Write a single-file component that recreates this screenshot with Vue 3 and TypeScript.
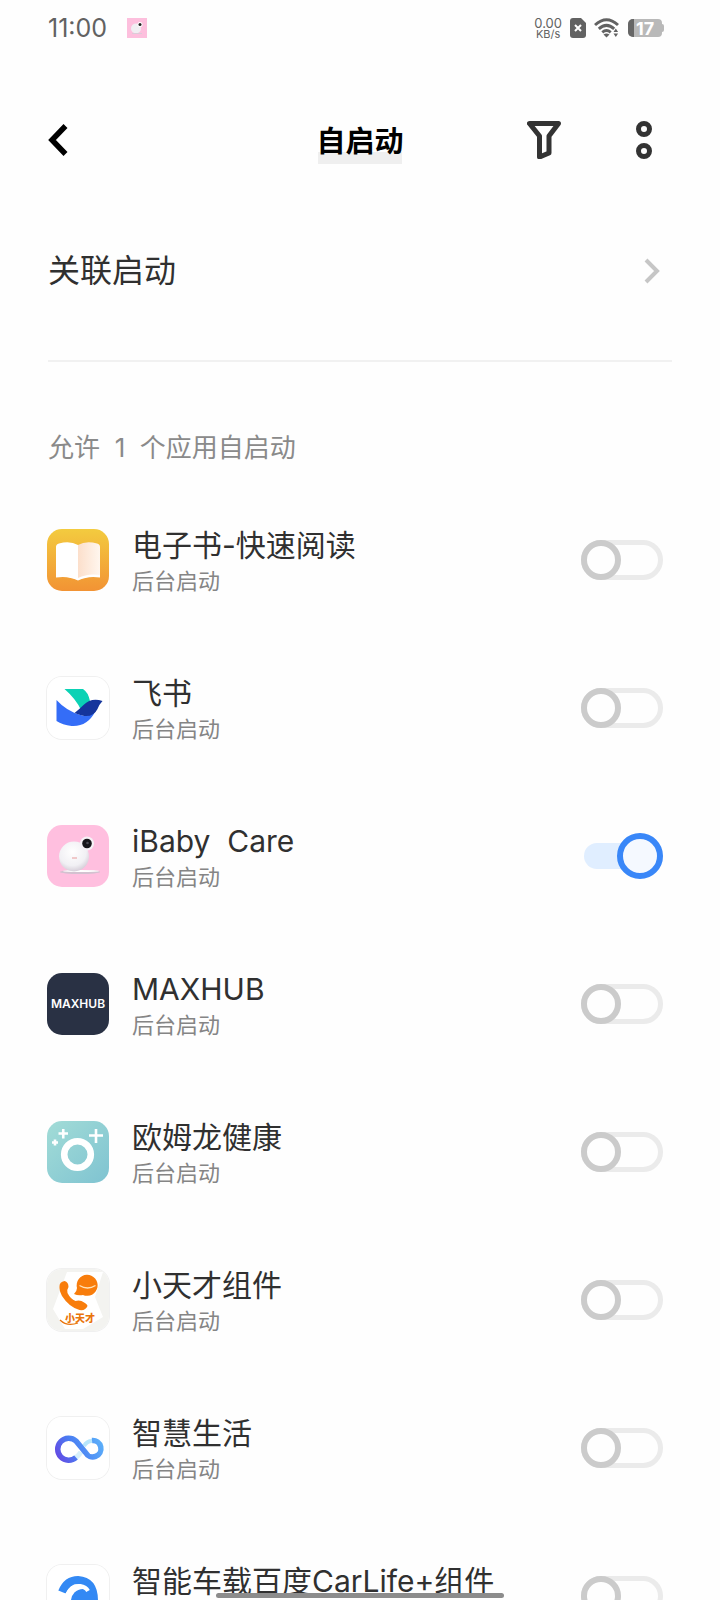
<script setup lang="ts">
import { ref } from 'vue'

interface AppEntry {
  id: string
  name: string
  enabled: boolean
}

const apps = ref<AppEntry[]>([
  { id: 'ebook', name: '电子书-快速阅读', enabled: false },
  { id: 'feishu', name: '飞书', enabled: false },
  { id: 'ibaby', name: 'iBaby  Care', enabled: true },
  { id: 'maxhub', name: 'MAXHUB', enabled: false },
  { id: 'omron', name: '欧姆龙健康', enabled: false },
  { id: 'xtc', name: '小天才组件', enabled: false },
  { id: 'life', name: '智慧生活', enabled: false },
  { id: 'carlife', name: '智能车载百度CarLife+组件', enabled: false },
])
</script>

<template>
  <div class="screen">
    <div class="status">
      <span class="clock">11:00</span>
      <svg class="notice" width="20" height="20" viewBox="0 0 20 20" aria-hidden="true">
        <rect width="20" height="20" fill="#fdbfdd" />
        <circle cx="9" cy="10.500" r="5" fill="#f0eef2" />
        <path d="M5 15.500h10" stroke="#dccbd8" />
        <circle cx="13" cy="6.500" r="2.500" fill="#fff" />
        <circle cx="13" cy="6.500" r="1.500" fill="#222" />
      </svg>
      <div class="speed"><span class="rate">0.00</span><span class="unit">KB/s</span></div>
      <svg class="sim" width="16" height="20" viewBox="0 0 16 20" aria-hidden="true">
        <path d="M3 0h8l5 5v12a3 3 0 0 1-3 3H3a3 3 0 0 1-3-3V3a3 3 0 0 1 3-3z" fill="#626262" />
        <path d="M5 7l6 6M11 7l-6 6" stroke="#fff" stroke-width="2" />
      </svg>
      <svg class="wifi" width="26" height="20" viewBox="0 0 26 20" aria-hidden="true">
        <g fill="none" stroke="#626262" stroke-width="3">
          <path d="M1 7Q12.500-3.500 24 7" />
          <path d="M4.800 10.800Q12.500 4 20.200 10.800" />
          <path d="M8.300 14.300Q12.500 10.800 16.700 14.300" />
        </g>
        <path d="M9.500 16.500q3-2 6 0l-3 3z" fill="#626262" />
        <path d="M19.500 14l2.300-3.500 2.300 3.500zM19.500 15.500l2.300 3.500 2.300-3.500z" fill="#626262" />
      </svg>
      <svg class="battery" width="36" height="18" viewBox="0 0 36 18" aria-hidden="true">
        <path d="M5 0h25a4 4 0 0 1 4 4v1q2 0 2 2v4q0 2-2 2v1a4 4 0 0 1-4 4H5a5 5 0 0 1-5-5V5a5 5 0 0 1 5-5z" fill="#b9b9b9" />
        <path d="M6 0H5a5 5 0 0 0-5 5v8a5 5 0 0 0 5 5h1z" fill="#666" />
        <text x="17" y="16" text-anchor="middle" font-size="18" font-weight="700" fill="#fff">17</text>
      </svg>
    </div>

    <header class="bar">
      <button class="plain back" type="button" aria-label="返回">
        <svg width="20" height="32" viewBox="0 0 20 32"><path d="M17.500 2L4 16l13.500 14" fill="none" stroke="#000" stroke-width="5.500" /></svg>
      </button>
      <h1 class="title">自启动</h1>
      <div class="actions">
        <button class="plain" type="button" aria-label="筛选">
          <svg width="34" height="38" viewBox="0 0 34 38"><path d="M2.500 2.500h29L22 15v17l-9.500 4V15z" fill="none" stroke="#333" stroke-width="5" stroke-linejoin="round" /></svg>
        </button>
        <button class="plain" type="button" aria-label="更多">
          <svg width="16" height="38" viewBox="0 0 16 38"><g fill="none" stroke="#333" stroke-width="5"><circle cx="8" cy="8" r="5.500" /><circle cx="8" cy="30" r="5.500" /></g></svg>
        </button>
      </div>
    </header>

    <nav class="related">
      <a class="related-link" href="#related">
        <span>关联启动</span>
        <svg width="16" height="26" viewBox="0 0 16 26" aria-hidden="true"><path d="M2 2l11 11L2 24" fill="none" stroke="#c6c6c6" stroke-width="4" /></svg>
      </a>
    </nav>

    <h2 class="count">允许&nbsp; 1 &nbsp;个应用自启动</h2>

    <ul class="list">
      <li v-for="app in apps" :key="app.id" class="row">
        <svg class="icon" :class="{ edged: ['feishu', 'xtc', 'life', 'carlife'].includes(app.id) }" width="62" height="62" viewBox="0 0 62 62" aria-hidden="true">
          <defs>
            <linearGradient id="g-book" x1="0" y1="0" x2="0" y2="1"><stop offset="0" stop-color="#f3cb3f" /><stop offset="1" stop-color="#f29334" /></linearGradient>
            <linearGradient id="g-page" x1="0" y1="0" x2="1" y2="0"><stop offset="0" stop-color="#fcdfcb" /><stop offset="1" stop-color="#fff6ee" /></linearGradient>
            <linearGradient id="g-omron" x1="0" y1="0" x2="1" y2="1"><stop offset="0" stop-color="#a2dcd7" /><stop offset="1" stop-color="#7fc3d1" /></linearGradient>
            <radialGradient id="g-ball" cx=".45" cy=".35" r=".7"><stop offset="0" stop-color="#fff" /><stop offset=".65" stop-color="#f1f0f4" /><stop offset="1" stop-color="#cfc6d2" /></radialGradient>
            <linearGradient id="g-loop" x1="8" y1="46" x2="54" y2="22" gradientUnits="userSpaceOnUse"><stop offset="0" stop-color="#6a3fe0" /><stop offset=".45" stop-color="#4a7df2" /><stop offset="1" stop-color="#5cb0fa" /></linearGradient>
          </defs>
          <template v-if="app.id === 'ebook'">
            <rect width="62" height="62" fill="url(#g-book)" />
            <path d="M9 18q0-3 3-3.500 11-3 19 1.500v35q-10-5-22-3z" fill="#fff" />
            <path d="M31 16q8-4.500 19-1.500 3 .5 3 3.500v30q-12-2-22 3z" fill="url(#g-page)" />
            <path d="M9 46q12-2 22 3 10-5 22-3v2.500q-12-2-22 3-10-5-22-3z" fill="#fff" />
          </template>
          <template v-else-if="app.id === 'feishu'">
            <rect width="62" height="62" fill="#fff" />
            <path d="M17.500 12H36q5 3 7 12l-9 9Q29 22 17.500 12z" fill="#0bd2b5" />
            <path d="M9.500 23q10 11 24 15 9 2 15-4-8 16-24 15-9-1-15-5z" fill="#346df7" />
            <path d="M27.500 36q5-4 9-8 8-8 19-4-3 3-5 8-4 8-13 7-5-1-10-3z" fill="#15359c" />
          </template>
          <template v-else-if="app.id === 'ibaby'">
            <rect width="62" height="62" fill="#ffbfdf" />
            <ellipse cx="33" cy="47" rx="20" ry="2" fill="#d3c1d0" />
            <ellipse cx="34" cy="46" rx="18" ry="1" fill="#fff" />
            <circle cx="27" cy="31.500" r="15" fill="url(#g-ball)" />
            <circle cx="40" cy="18.500" r="7" fill="#f6f2f6" />
            <circle cx="40" cy="18.500" r="4.800" fill="#17171b" />
            <circle cx="40.500" cy="18" r="1.300" fill="#4c4c55" />
            <path d="M25 33h5" stroke="#e79a9a" />
          </template>
          <template v-else-if="app.id === 'maxhub'">
            <rect width="62" height="62" fill="#293144" />
            <text x="31" y="35" text-anchor="middle" font-size="12" font-weight="600" fill="#fff">MAXHUB</text>
          </template>
          <template v-else-if="app.id === 'omron'">
            <rect width="62" height="62" fill="url(#g-omron)" />
            <circle cx="30.500" cy="33.500" r="13.300" fill="none" stroke="#fff" stroke-width="6.600" />
            <path d="M11.500 12.500h9.500M16.250 8v9.500M42 14.500h14M49 8v14M5 21.500h6M8 18.500v6" stroke="#fff" stroke-width="2.600" />
          </template>
          <template v-else-if="app.id === 'xtc'">
            <rect width="62" height="62" fill="#f3f3f0" />
            <path d="M20 3h36l-8 25 8 20-20 12H18L6 40z" fill="#fff" />
            <path d="M12.500 17q0-4 5-5 4 1 4 6-2 3-1 6 3 6 8 8 3-1 6 0 6 3 6 5-2 5-8 4Q22 38 15 27q-3-6-2.500-10z" fill="#f87d0c" />
            <path d="M27 25q3-3 3-6a10.500 10.500 0 1 1 6 7q-5 1-9-1z" fill="#f87d0c" />
            <path d="M32.500 16.500q8 5 16 0" fill="none" stroke="#ffe2b8" stroke-width="1.300" />
            <text x="33" y="53" text-anchor="middle" font-size="10" font-weight="900" fill="#e9740c">小天才</text>
            <path d="M13 51q7 7 18 3" fill="none" stroke="#e9740c" stroke-width="1.200" />
          </template>
          <template v-else-if="app.id === 'life'">
            <rect width="62" height="62" fill="#fff" />
            <path d="M26 42q5-2 8-7" fill="none" stroke="#d7f0fb" stroke-width="5" />
            <path d="M37 29q3-5 8-5" fill="none" stroke="#b8e6fb" stroke-width="4" />
            <path d="M29 40.500A11 11 0 1 1 29 24L38.500 35.500A8.200 8.200 0 1 0 45 23.500" fill="none" stroke="url(#g-loop)" stroke-width="5.500" />
          </template>
          <template v-else>
            <rect width="62" height="62" fill="#fff" />
            <path d="M15 27Q20 15 31 15q16 1 16 21 0 15-16 15-10 0-15-8" fill="none" stroke="#3389f4" stroke-width="8" />
            <circle cx="36" cy="36" r="12" fill="#3389f4" />
            <path d="M20 30q5-10 13-9 6 1 8 5" fill="none" stroke="#fff" stroke-width="4" />
            <circle cx="38" cy="38" r="3" fill="#fff" />
          </template>
        </svg>
        <label class="info" :for="'switch-' + app.id">
          <span class="name">{{ app.name }}</span>
          <span class="mode">后台启动</span>
        </label>
        <input :id="'switch-' + app.id" v-model="app.enabled" class="switch" type="checkbox" role="switch" />
      </li>
    </ul>
    <div class="home"></div>
  </div>
</template>

<style>
body {
  margin: 0;
  background: #fefefe;
}
</style>

<style scoped>
.screen {
  position: relative;
  box-sizing: border-box;
  height: 100vh;
  overflow: hidden;
  background: #fefefe;
  color: #303030;
  font-family: Inter, "Noto Sans CJK SC", sans-serif;
}
.status {
  display: flex;
  align-items: center;
  height: 56px;
  padding: 0 56px 0 48px;
  color: #626262;
}
.clock {
  font-size: 25px;
  line-height: 32px;
}
.notice {
  margin-left: 20px;
}
.speed {
  display: flex;
  flex-direction: column;
  align-items: center;
  margin-left: auto;
}
.rate {
  font-size: 13px;
  line-height: 12px;
}
.unit {
  font-size: 11px;
  line-height: 10px;
}
.sim {
  margin-left: 8px;
}
.wifi {
  margin-left: 8px;
}
.battery {
  margin-left: 8px;
}
.bar {
  display: grid;
  grid-template-columns: 1fr auto 1fr;
  align-items: center;
  height: 168px;
  padding: 0 68px 0 48px;
}
.plain {
  display: block;
  padding: 0;
  border: 0;
  background: none;
}
.plain svg {
  display: block;
}
.back {
  justify-self: start;
}
.title {
  margin: 0 -10px 0 10px;
  padding-top: 4px;
  color: #000;
  font-size: 29px;
  font-weight: 600;
  line-height: 44px;
  background: linear-gradient(#efefef, #efefef) bottom / 84px 12px no-repeat;
}
.actions {
  display: flex;
  gap: 75px;
  justify-self: end;
}
.related {
  margin: 0 48px;
  padding-bottom: 42px;
  border-bottom: 2px solid #f1f1f1;
}
.related-link {
  display: flex;
  align-items: center;
  justify-content: space-between;
  padding-right: 12px;
  color: #303030;
  font-size: 32px;
  line-height: 94px;
  text-decoration: none;
}
.count {
  margin: 0;
  padding: 48px 48px 0;
  color: #8a8a8a;
  font-size: 26px;
  font-weight: 400;
  line-height: 76px;
}
.list {
  margin: 0;
  padding: 0;
  list-style: none;
}
.row {
  display: flex;
  align-items: center;
  height: 148px;
  padding: 0 57px 0 47px;
}
.icon {
  flex: none;
  border-radius: 15px;
}
.edged {
  box-shadow: 0 0 0 1px #f0f0f0;
}
.info {
  display: flex;
  flex: 1;
  flex-direction: column;
  margin-left: 23px;
  padding-top: 6px;
}
.name {
  font-size: 30px;
  line-height: 36px;
  white-space: pre;
}
.mode {
  color: #858585;
  font-size: 22px;
  line-height: 36px;
}
.switch {
  position: relative;
  flex: none;
  width: 82px;
  height: 40px;
  margin: 0;
  border: 5px solid #ebebeb;
  border-radius: 20px;
  appearance: none;
}
.switch::before {
  position: absolute;
  top: -5px;
  left: -5px;
  box-sizing: border-box;
  width: 40px;
  height: 40px;
  border: 6px solid #cbcbcb;
  border-radius: 50%;
  background: #fefefe;
  content: "";
}
.switch:checked {
  width: 79px;
  height: 26px;
  border: 0;
  background: #e0eeff;
}
.switch:checked::before {
  top: -10px;
  right: 0;
  left: auto;
  width: 46px;
  height: 46px;
  border-color: #3987f8;
  background: #f5f9ff;
}
.home {
  position: absolute;
  bottom: 2px;
  left: 30%;
  width: 40%;
  height: 5px;
  border-radius: 3px;
  background: #8c8c8c;
}
</style>
